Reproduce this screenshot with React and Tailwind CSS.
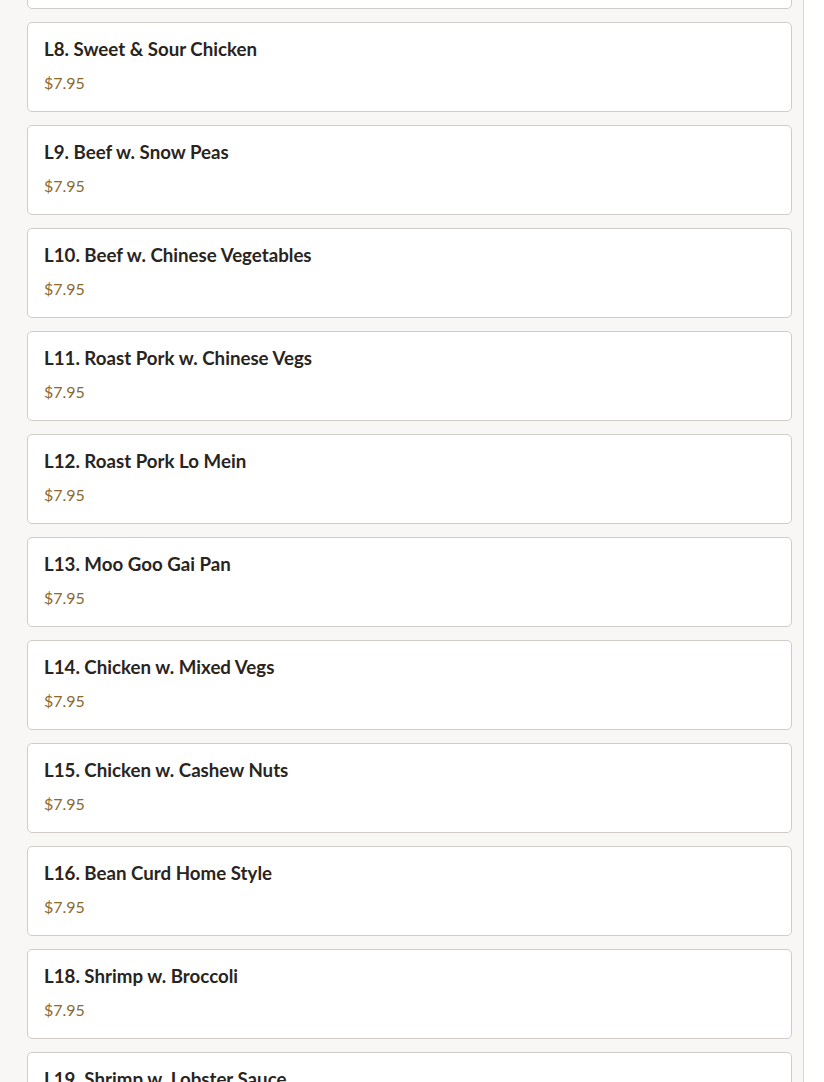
import React from 'react'

const items = [
  'L7. Pepper Steak w. Onions',
  'L8. Sweet & Sour Chicken',
  'L9. Beef w. Snow Peas',
  'L10. Beef w. Chinese Vegetables',
  'L11. Roast Pork w. Chinese Vegs',
  'L12. Roast Pork Lo Mein',
  'L13. Moo Goo Gai Pan',
  'L14. Chicken w. Mixed Vegs',
  'L15. Chicken w. Cashew Nuts',
  'L16. Bean Curd Home Style',
  'L18. Shrimp w. Broccoli',
  'L19. Shrimp w. Lobster Sauce',
]

function MenuCard({ name, price }) {
  return (
    <div className="h-[90px] shrink-0 rounded-[5px] border border-[#d0cdc9] bg-white px-4 pt-[14px]">
      <h3 className="text-[18.7px] font-bold leading-6 text-[#2a2421]">{name}</h3>
      <p className="mt-[12px] text-[16px] leading-5 text-[#8a6a2d]">{price}</p>
    </div>
  )
}

export default function App() {
  return (
    <div className="h-[1082px] overflow-hidden bg-white font-['Lato','Noto_Sans',sans-serif]">
      <div className="flex h-full w-[804px] flex-col border-r border-[#d9d7d4] bg-[#f8f7f5] pl-[27px] pr-[11px]">
        <div className="-mt-[81px] flex flex-col gap-[13px]">
          {items.map((name) => (
            <MenuCard key={name} name={name} price="$7.95" />
          ))}
        </div>
      </div>
    </div>
  )
}
